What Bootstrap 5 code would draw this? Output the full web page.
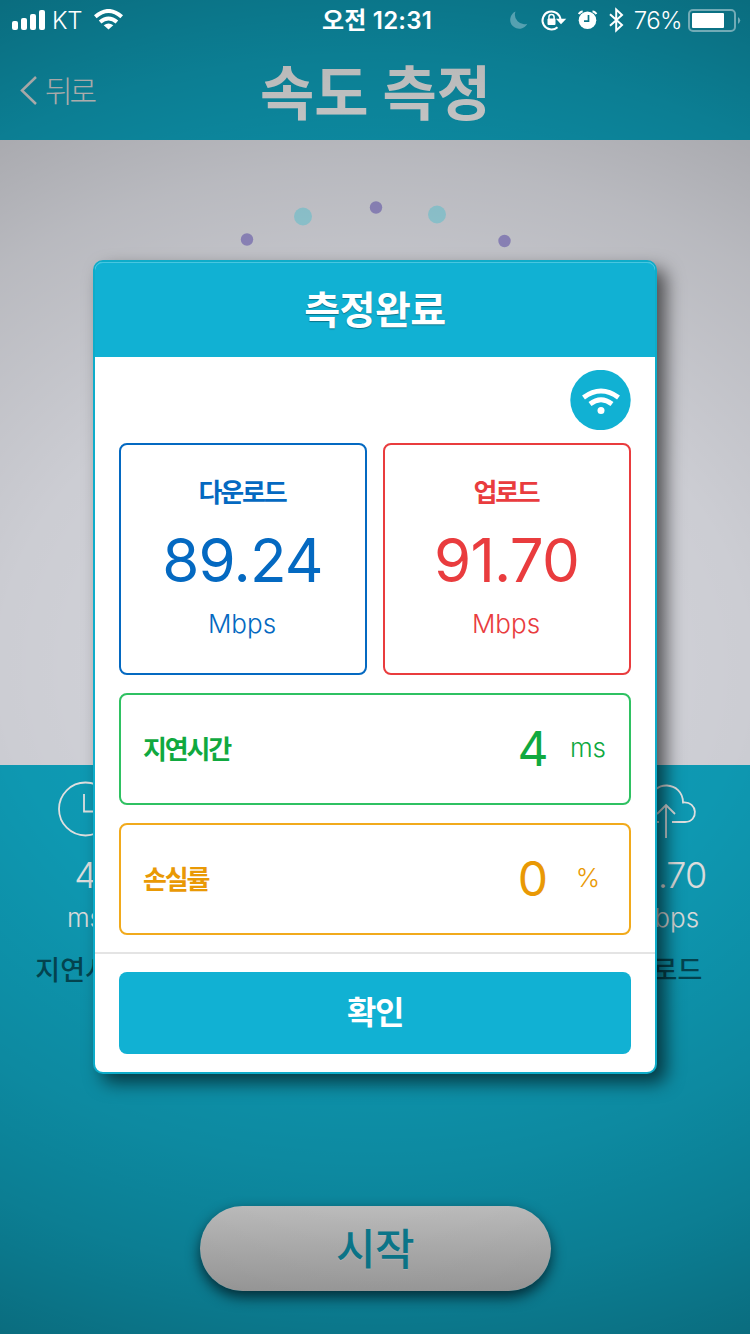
<!DOCTYPE html>
<html lang="ko">
<head>
<meta charset="utf-8">
<meta name="viewport" content="width=device-width, initial-scale=1">
<title>속도 측정</title>
<link rel="stylesheet" href="https://cdn.jsdelivr.net/npm/bootstrap@5.3.0/dist/css/bootstrap.min.css">
<style>
body{font-family:Inter,"Noto Sans CJK KR",sans-serif;background:#0b8098}
.screen{width:750px;height:1334px;background:#10aecb}
.nav-title{font-size:59px;font-weight:700;line-height:60px;color:#fff;padding:8px 0 0 1px}
.top-area{height:140px}
.status-bar{height:40px;color:#fff;font-size:24px;line-height:40px;z-index:5}
.status-bar svg{display:block;flex:none}
.kt{font-weight:300;letter-spacing:-.4px;padding-top:2px;margin-left:6px}
.wifi{margin-left:12px}
.clock{font-weight:600;padding:1px 0 0 4px;letter-spacing:.2px}
.pct{font-weight:350;letter-spacing:-.6px;padding-top:2px;margin-left:4px}
.battery{margin:0 9px 0 5px}
.title-bar{height:100px;color:#fff}
.back-link{font-size:30px;font-weight:300;letter-spacing:-3px;color:#efefef;line-height:40px;padding-top:2px;margin-left:7px}
.gauge{height:625px;background:#eaebf2}
.stats{height:433px;color:#fff}
.stat-col{width:170px;text-align:center}
.stat-value{font-size:36px;font-weight:300;line-height:40px;letter-spacing:-1px}
.stat-unit{font-size:26px;font-weight:300;line-height:30px;margin-top:8px}
.stat-name{font-size:27px;font-weight:500;line-height:32px;color:#04505e;margin-top:22px}
.start-btn{width:351px;height:85px;border-radius:43px;background:linear-gradient(#f4f4f4,#d2d2d2);color:#0f9cb6;font-size:43px;font-weight:500;line-height:84px;box-shadow:0 6px 14px rgba(0,20,30,.75);letter-spacing:-.5px;text-shadow:0 1px 0 rgba(255,255,255,.5)}
.dim{background:radial-gradient(900px 740px at 375px 667px,rgba(0,0,0,.08),rgba(0,0,0,.13) 42%,rgba(0,0,0,.21) 68%,rgba(0,0,0,.28) 83%,rgba(0,0,0,.38));z-index:2}
.result{left:93px;top:260px;width:564px;height:814px;border:2px solid #0eacc9;border-radius:10px;background:#fff;z-index:4;box-shadow:9px 9px 18px rgba(0,0,0,.6)}
.result-head{height:95px;border-radius:8px 8px 0 0;background:#11b1d3;box-shadow:inset 0 1px 0 #48c6e0;color:#fff;font-size:39px;font-weight:700;line-height:95px;letter-spacing:-.5px;text-shadow:0 1px 1px rgba(0,0,0,.35)}
.net-row{padding:13px 24px 13px}
.net-badge{width:61px;height:60px}
.speeds{padding:0 24px}
.box{border:2px solid;border-radius:8px}
.c-down{color:#0469c1}.c-up{color:#e93c3e}
.c-lat{color:#10a93f;border-color:#2fc162}.c-loss{color:#e99905;border-color:#f1aa1c}
.speed{width:248px;height:232px;padding-top:29px}
.label-kr{font-size:26px;font-weight:700;line-height:38px;letter-spacing:-2.2px}
.speed .label-kr{margin-left:-2px}
.big{font-size:60px;line-height:64px;letter-spacing:-.8px;margin:16px 1px 0 0}
.unit{font-size:26px;line-height:32px;font-weight:300}
.speed .unit{margin:16px 2px 0 0}
.rows{padding:18px 24px 17px;gap:18px}
.line-box{height:112px;padding:0 16px 0 22px}
.line-box .label-kr{padding-top:2px}
.mid{font-size:48px;line-height:60px;width:40px;text-align:center}
.unit-col{width:48px;text-align:center;margin-left:12px;margin-right:1px;padding-bottom:3px}
.line-box .mid{margin-right:-1px}
.foot{border-top:2px solid #e4e4e4;padding:18px 24px}
.ok-btn{height:82px;border-radius:8px;background:#11b1d3;border:0;color:#fff;font-size:32px;font-weight:700;letter-spacing:-1.5px;line-height:82px;padding:0}
</style>
</head>
<body class="m-0">
<main class="screen position-relative overflow-hidden">
  <header class="top-area">
    <div class="status-bar position-relative d-flex justify-content-between">
      <div class="d-flex align-items-center ps-2 ms-1">
        <svg width="34" height="22" viewBox="0 0 34 22" fill="#fff"><rect y="12" width="6" height="9" rx="2"/><rect x="9" y="9" width="6" height="12" rx="2"/><rect x="18" y="5" width="6" height="16" rx="2"/><rect x="27" y="1" width="6" height="20" rx="2"/></svg>
        <span class="kt">KT</span>
        <svg class="wifi" width="30" height="22" viewBox="0 0 30 22" fill="none" stroke="#fff" stroke-width="4"><path d="M1.300 7.800Q14.500 -3.800 27.700 7.800"/><path d="M6.100 13Q14.500 6 22.900 13"/><path d="M14.500 20.500 9.700 16.200Q14.500 12.600 19.300 16.200Z" fill="#fff" stroke="none"/></svg>
      </div>
      <div class="position-absolute start-50 translate-middle-x clock text-nowrap">오전 12:31</div>
      <div class="d-flex align-items-center">
        <svg width="122" height="26" viewBox="0 0 122 26" fill="none" stroke="#fff">
          <path d="M12.5 4.4A9 9 0 1 0 24.3 16.5A9.4 9.4 0 0 1 12.5 4.4Z" transform="translate(-5 .2)" fill="#56a1b1" stroke="none"/>
          <g transform="translate(-2 0)"><path d="M54.500 13A9 9 0 1 0 51.500 20.200" stroke-width="2"/><path d="M49.900 11.800H60.300L55 17.200Z" fill="#fff" stroke="none"/><rect x="41.500" y="11.500" width="8" height="6.500" rx="1" fill="#fff" stroke="none"/><path d="M42.900 12V10a2.600 2.600 0 0 1 5.200 0V12" stroke-width="1.500"/></g>
          <g transform="translate(3 0)"><circle cx="76.500" cy="13.300" r="8.800" fill="#fff" stroke="none"/><path d="M68 7.200A4 4 0 0 1 71.700 4.500M85.200 7.200A4 4 0 0 0 81.500 4.500" stroke-width="2.200"/><path d="M77.500 8V14.200H73" stroke="#0b7588" stroke-width="1.700"/></g>
          <path d="M102 7.200 114 18 108.200 23.400V2.600L114 8 102 18.800" stroke-width="2"/>
        </svg>
        <span class="pct">76%</span>
        <svg class="battery" width="54" height="26" viewBox="0 0 54 26"><rect x="2" y="3" width="46" height="21" rx="4" fill="none" stroke="#72abb6" stroke-width="2"/><rect x="5" y="6" width="32" height="15" rx="1" fill="#fff"/><path d="M51 10Q55.500 13.500 51 17Z" fill="#72abb6"/></svg>
      </div>
    </div>
    <div class="title-bar position-relative d-flex align-items-center">
      <svg class="ms-3" width="22" height="30" viewBox="0 0 22 30" fill="none" stroke="#efefef" stroke-width="2.500"><path d="M20 2 6 15.500 20 29"/></svg>
      <span class="back-link">뒤로</span>
      <h1 class="nav-title position-absolute start-50 translate-middle-x text-nowrap m-0">속도 측정</h1>
    </div>
  </header>
  <section class="gauge">
    <svg width="750" height="125" viewBox="0 0 750 125"><g fill="#a59cdb"><circle cx="247" cy="99.500" r="6.200"/><circle cx="376" cy="67.500" r="6.200"/><circle cx="504.500" cy="101" r="6.200"/></g><g fill="#a9eaf6"><circle cx="303" cy="76.500" r="9"/><circle cx="437" cy="74.500" r="9"/></g></svg>
  </section>
  <section class="stats d-flex justify-content-between">
    <div class="stat-col d-flex flex-column align-items-center">
      <svg width="60" height="90" viewBox="0 0 60 90" fill="none" stroke="#fff" stroke-width="1.800"><circle cx="30.500" cy="44" r="26.500"/><path d="M29 29V46.500H43"/></svg>
      <div class="stat-value">4</div><div class="stat-unit">ms</div><div class="stat-name">지연시간</div>
    </div>
    <div class="stat-col d-flex flex-column align-items-center">
      <svg width="64" height="90" viewBox="-3 0 64 90" fill="none" stroke="#fff" stroke-width="1.800"><path d="M23 57H15C0 56 1 37 15 36.500C15 14 47 16 47 37.500C62 36 63 57 49 57H36"/><path d="M30 73V40M21 49 30 40 39 49"/></svg>
      <div class="stat-value">91.70</div><div class="stat-unit">Mbps</div><div class="stat-name">업로드</div>
    </div>
  </section>
  <div class="d-flex justify-content-center"><button class="start-btn border-0 p-0 mt-2">시작</button></div>
  <div class="dim position-absolute top-0 start-0 w-100 h-100"></div>
  <section class="result position-absolute">
    <div class="result-head text-center">측정완료</div>
    <div class="d-flex justify-content-end net-row">
      <svg class="net-badge" viewBox="0 0 61 60" fill="none" stroke="#fff"><circle cx="30.500" cy="30" r="30.200" fill="#11b1d3" stroke="none"/><path d="M13.500 27.500Q31 14.500 48.500 27.500" stroke-width="4.800"/><path d="M20 34Q31 25.500 42 34" stroke-width="4.800"/><circle cx="31" cy="40.500" r="3.500" fill="#fff" stroke="none"/></svg>
    </div>
    <div class="d-flex justify-content-between speeds">
      <div class="box speed text-center c-down"><div class="label-kr">다운로드</div><div class="big">89.24</div><div class="unit">Mbps</div></div>
      <div class="box speed text-center c-up"><div class="label-kr">업로드</div><div class="big">91.70</div><div class="unit">Mbps</div></div>
    </div>
    <div class="rows d-flex flex-column">
      <div class="box line-box c-lat d-flex align-items-center"><span class="label-kr me-auto">지연시간</span><span class="mid">4</span><span class="unit unit-col">ms</span></div>
      <div class="box line-box c-loss d-flex align-items-center"><span class="label-kr me-auto">손실률</span><span class="mid">0</span><span class="unit unit-col">%</span></div>
    </div>
    <div class="foot"><button class="ok-btn btn w-100 d-block">확인</button></div>
  </section>
</main>
<script src="https://cdn.jsdelivr.net/npm/bootstrap@5.3.0/dist/js/bootstrap.bundle.min.js"></script>
</body>
</html>
